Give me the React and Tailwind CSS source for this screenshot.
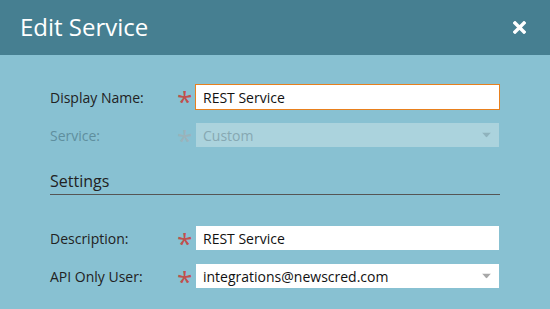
export default function App() {
  const font = { fontFamily: '"Open Sans", "Noto Sans", sans-serif' };
  const Star = ({ disabled }) => (
    <span
      className={`self-start w-[18px] shrink-0 mt-[3px] text-[28px] leading-[28px] ${disabled ? "text-[#9ab3bb]" : "text-[#c0504d]"}`}
    >
      *
    </span>
  );
  const Arrow = ({ color }) => (
    <svg width="9" height="5" viewBox="0 0 9 5" className="absolute right-[8px] top-1/2 -translate-y-1/2">
      <path d="M0 0 H9 L4.5 5 Z" fill={color} />
    </svg>
  );
  return (
    <div className="w-[550px] h-[309px] overflow-hidden bg-[#88c1d2]" style={font}>
      <div className="h-[55px] bg-[#467f91] flex items-center justify-between pl-[20px] pr-[24px]">
        <span className="text-white text-[24px] leading-none pb-[1px]">Edit Service</span>
        <svg width="13" height="13" viewBox="0 0 13 13">
          <path d="M2 2 L11 11 M11 2 L2 11" stroke="white" strokeWidth="3.4" strokeLinecap="square" />
        </svg>
      </div>
      <div className="pl-[50px] pr-[50px] pt-[29px] text-[14px]">
        <div className="flex items-center h-[26px]">
          <span className="w-[127px] shrink-0 text-[#222]">Display Name:</span>
          <Star />
          <div className="flex-1 h-[26px] bg-white border border-[#e8801e] flex items-center pl-[7px] text-[#111]">
            REST Service
          </div>
        </div>
        <div className="flex items-center h-[24px] mt-[13px]">
          <span className="w-[127px] shrink-0 text-[#5f8f9e]">Service:</span>
          <Star disabled />
          <div className="relative flex-1 h-[24px] ml-[1px] mr-[1px] bg-[#abd3dd] flex items-center pl-[7px] text-[#86a8b2]">
            Custom
            <Arrow color="#8fb3bd" />
          </div>
        </div>
        <div className="mt-[25px] border-b border-[#555] pb-[3px] text-[16px] text-[#222] leading-[19px]">
          Settings
        </div>
        <div className="flex items-center h-[24px] mt-[31px]">
          <span className="w-[127px] shrink-0 text-[#222]">Description:</span>
          <Star />
          <div className="flex-1 h-[24px] mr-[1px] ml-[1px] bg-white flex items-center pl-[7px] text-[#111]">
            REST Service
          </div>
        </div>
        <div className="flex items-center h-[24px] mt-[14px]">
          <span className="w-[127px] shrink-0 text-[#222]">API Only User:</span>
          <Star />
          <div className="relative flex-1 h-[24px] mr-[1px] ml-[1px] bg-white flex items-center pl-[7px] text-[#111]">
            integrations@newscred.com
            <Arrow color="#a8a8a8" />
          </div>
        </div>
      </div>
    </div>
  );
}
